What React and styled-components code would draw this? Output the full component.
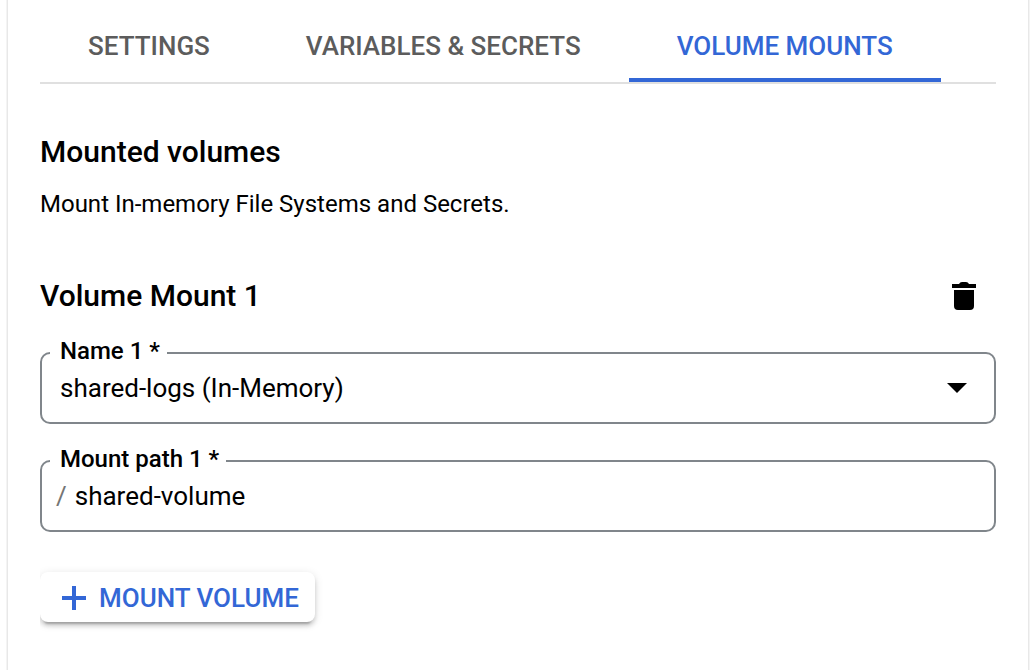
import React, { useState } from "react";
import styled, { createGlobalStyle } from "styled-components";

const GlobalStyle = createGlobalStyle`
  * { box-sizing: border-box; }
  body {
    margin: 0;
    background: #fff;
    color: #000;
    font-family: Roboto, "Liberation Sans", sans-serif;
  }
  button, input, select { font-family: inherit; }
`;

const Card = styled.main`
  min-height: 100vh;
  margin: 0 5px 0 7px;
  padding: 0 32px 48px;
  border: solid #e8e8e8;
  border-width: 0 1px;
  box-shadow: 0 0 0 1px #f4f4f4;
`;

const TabBar = styled.nav`
  display: flex;
  border-bottom: 2px solid #e0e0e0;
`;

const Tab = styled.button`
  padding: 28px 48px 14px;
  border: 0;
  border-bottom: 4px solid ${(p) => (p.$active ? "#3367d6" : "transparent")};
  background: none;
  color: ${(p) => (p.$active ? "#3367d6" : "#5c5c5c")};
  font-size: 26px;
  font-weight: 500;
  line-height: 36px;
  white-space: nowrap;
  cursor: pointer;
`;

const Heading = styled.h2`
  margin: 0;
  font-size: 30px;
  font-weight: 500;
  line-height: 36px;
`;

const Intro = styled.section`
  margin-top: 50px;
`;

const Description = styled.p`
  margin: 18px 0 0;
  font-size: 24px;
  line-height: 32px;
`;

const MountHeader = styled.header`
  display: flex;
  align-items: center;
  justify-content: space-between;
  height: 40px;
  margin-top: 56px;
  padding-right: 16px;
`;

const IconButton = styled.button`
  display: flex;
  align-items: center;
  justify-content: center;
  width: 32px;
  height: 40px;
  padding: 0;
  border: 0;
  background: none;
  cursor: pointer;
`;

const Fields = styled.div`
  display: grid;
  gap: 23px;
  margin-top: 23px;
`;

const Field = styled.fieldset`
  min-width: 0;
  margin: 0;
  padding: 0 8px 13px;
  border: 2px solid #80868b;
  border-radius: 10px;
`;

const Legend = styled.legend`
  padding: 0 7px 4px 10px;
  font-size: 24px;
  font-weight: 500;
  line-height: 24px;
`;

const Control = styled.div`
  display: flex;
  align-items: center;
  height: 42px;
  padding: 0 19px 0 ${(p) => (p.$prefixed ? "6px" : "10px")};
  font-size: 26px;
`;

const Select = styled.select`
  flex: 1;
  min-width: 0;
  height: 42px;
  padding: 0;
  border: 0;
  outline: 0;
  appearance: none;
  background: none;
  color: #000;
  font-size: 26px;
`;

const Input = styled.input`
  flex: 1;
  min-width: 0;
  height: 42px;
  padding: 0;
  border: 0;
  outline: 0;
  background: none;
  color: #000;
  font-size: 26px;
`;

const Prefix = styled.span`
  margin-right: 8px;
  color: #757575;
`;

const RaisedButton = styled.button`
  display: inline-flex;
  align-items: center;
  gap: 13px;
  height: 50px;
  margin-top: 40px;
  padding: 2px 16px 0 22px;
  border: 0;
  border-radius: 8px;
  background: #fff;
  box-shadow: 0 6px 2px -4px rgba(0, 0, 0, 0.2), 0 4px 4px rgba(0, 0, 0, 0.14),
    0 2px 10px rgba(0, 0, 0, 0.12);
  clip-path: inset(-20px -20px -20px 0);
  color: #3367d6;
  font-size: 26px;
  font-weight: 500;
  white-space: nowrap;
  cursor: pointer;
`;

const tabs = ["SETTINGS", "VARIABLES & SECRETS", "VOLUME MOUNTS"];

const TrashIcon = () => (
  <svg width="24" height="28" viewBox="0 0 24 28" aria-hidden="true">
    <path d="M0 2h7q1-2 3-2h4q2 0 3 2h7v4H0zM2 8h20v16q0 4-4 4H6q-4 0-4-4z" />
  </svg>
);

const CaretIcon = () => (
  <svg width="20" height="10" viewBox="0 0 20 10" aria-hidden="true">
    <path d="M0 0h20L10 10z" />
  </svg>
);

const PlusIcon = () => (
  <svg width="24" height="24" viewBox="0 0 24 24" fill="currentColor" aria-hidden="true">
    <path d="M10 0h4v10h10v4H14v10h-4V14H0v-4h10z" />
  </svg>
);

export default function App() {
  const [active, setActive] = useState("VOLUME MOUNTS");
  const [path, setPath] = useState("shared-volume");

  return (
    <>
      <GlobalStyle />
      <Card>
        <TabBar>
          {tabs.map((name) => (
            <Tab key={name} type="button" $active={name === active} onClick={() => setActive(name)}>
              {name}
            </Tab>
          ))}
        </TabBar>
        <Intro>
          <Heading>Mounted volumes</Heading>
          <Description>Mount In-memory File Systems and Secrets.</Description>
        </Intro>
        <MountHeader>
          <Heading>Volume Mount 1</Heading>
          <IconButton type="button" aria-label="Delete volume mount 1">
            <TrashIcon />
          </IconButton>
        </MountHeader>
        <Fields>
          <Field>
            <Legend>
              <label htmlFor="volume-name">Name 1 *</label>
            </Legend>
            <Control>
              <Select id="volume-name">
                <option>shared-logs (In-Memory)</option>
              </Select>
              <CaretIcon />
            </Control>
          </Field>
          <Field>
            <Legend>
              <label htmlFor="mount-path">Mount path 1 *</label>
            </Legend>
            <Control $prefixed>
              <Prefix>/</Prefix>
              <Input id="mount-path" type="text" value={path} onChange={(e) => setPath(e.target.value)} />
            </Control>
          </Field>
        </Fields>
        <RaisedButton type="button">
          <PlusIcon />
          MOUNT VOLUME
        </RaisedButton>
      </Card>
    </>
  );
}
